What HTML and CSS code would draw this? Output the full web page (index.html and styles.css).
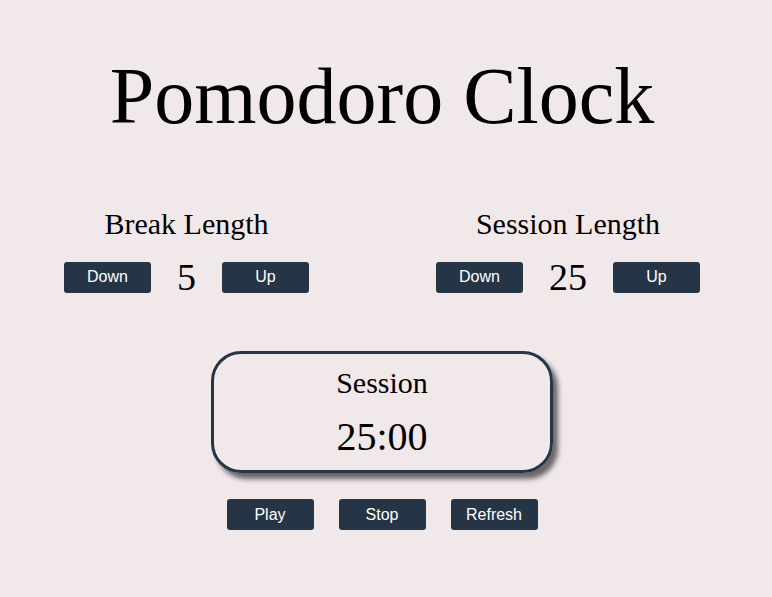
FILE: index.html
```html
<!DOCTYPE html>
<html>
<head>
<meta charset="utf-8">
<link rel="stylesheet" href="styles.css">
</head>
<body>
<div class="page">
  <h1 class="title">Pomodoro Clock</h1>
  <div class="settings">
    <div class="setting">
      <div class="setting-label">Break Length</div>
      <div class="controls">
        <button class="btn">Down</button>
        <span class="value">5</span>
        <button class="btn">Up</button>
      </div>
    </div>
    <div class="setting">
      <div class="setting-label">Session Length</div>
      <div class="controls">
        <button class="btn">Down</button>
        <span class="value">25</span>
        <button class="btn">Up</button>
      </div>
    </div>
  </div>
  <div class="timer">
    <div class="timer-label">Session</div>
    <div class="timer-time">25:00</div>
  </div>
  <div class="actions">
    <button class="btn">Play</button>
    <button class="btn">Stop</button>
    <button class="btn">Refresh</button>
  </div>
</div>
</body>
</html>
```
FILE: styles.css
```css
html, body {
  margin: 0;
  padding: 0;
  background: #f1e8e9;
}
body {
  font-family: "Liberation Serif", "Times New Roman", serif;
  color: #000;
}
.page {
  width: 748px;
  margin-left: 8px;
  display: flex;
  flex-direction: column;
  align-items: center;
}
.title {
  margin: 50px 0 0;
  font-size: 80px;
  font-weight: normal;
  line-height: 92px;
}
.settings {
  display: flex;
  justify-content: space-between;
  width: 636px;
  margin-top: 65px;
}
.setting {
  display: flex;
  flex-direction: column;
  align-items: center;
}
.setting-label {
  font-size: 30px;
  line-height: 34px;
}
.controls {
  display: flex;
  align-items: center;
  margin-top: 19px;
}
.value {
  font-size: 38px;
  line-height: 34px;
  margin: 0 26px;
}
.btn {
  width: 87px;
  height: 31px;
  border: none;
  border-radius: 3px;
  background: #263545;
  color: #fff;
  font-family: "Liberation Sans", Arial, sans-serif;
  font-size: 16px;
  padding: 0;
}
.timer {
  box-sizing: border-box;
  width: 342px;
  height: 122px;
  margin-top: 57px;
  border: 3px solid #263545;
  border-radius: 30px;
  box-shadow: 5px 6px 5px #6a6668;
  display: flex;
  flex-direction: column;
  align-items: center;
}
.timer-label {
  font-size: 30px;
  line-height: 34px;
  margin-top: 12px;
}
.timer-time {
  font-size: 40px;
  line-height: 46px;
  margin-top: 14px;
}
.actions {
  display: flex;
  gap: 25px;
  margin-top: 26px;
}
```
